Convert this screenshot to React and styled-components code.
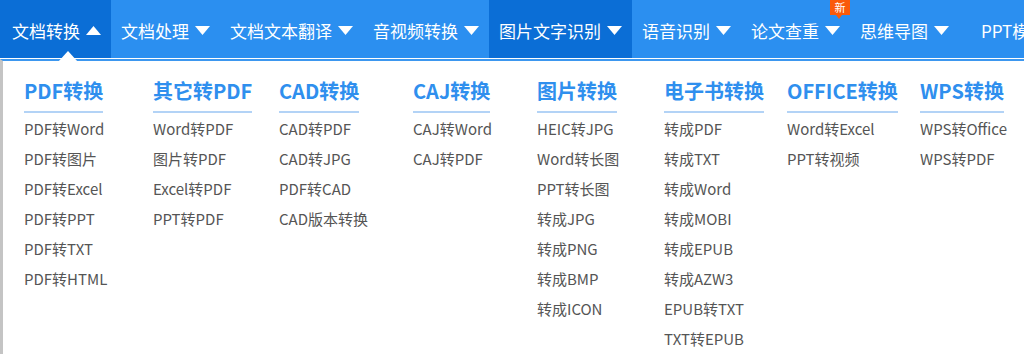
import styled, { createGlobalStyle } from "styled-components";

const GlobalStyle = createGlobalStyle`
  html, body {
    margin: 0;
    padding: 0;
    background: #ffffff;
  }
  body {
    font-family: "Noto Sans CJK SC", "Noto Sans", sans-serif;
  }
`;

const NAV_ITEMS = [
  { label: "文档转换", active: true, open: true, first: true },
  { label: "文档处理" },
  { label: "文档文本翻译" },
  { label: "音视频转换" },
  { label: "图片文字识别", active: true },
  { label: "语音识别" },
  { label: "论文查重", badge: "新" },
  { label: "思维导图" },
  { label: "PPT模板", last: true },
];

const COLUMNS = [
  { title: "PDF转换", width: 129, items: ["PDF转Word", "PDF转图片", "PDF转Excel", "PDF转PPT", "PDF转TXT", "PDF转HTML"] },
  { title: "其它转PDF", width: 126, items: ["Word转PDF", "图片转PDF", "Excel转PDF", "PPT转PDF"] },
  { title: "CAD转换", width: 134, items: ["CAD转PDF", "CAD转JPG", "PDF转CAD", "CAD版本转换"] },
  { title: "CAJ转换", width: 124, items: ["CAJ转Word", "CAJ转PDF"] },
  { title: "图片转换", width: 127, items: ["HEIC转JPG", "Word转长图", "PPT转长图", "转成JPG", "转成PNG", "转成BMP", "转成ICON"] },
  { title: "电子书转换", width: 123, items: ["转成PDF", "转成TXT", "转成Word", "转成MOBI", "转成EPUB", "转成AZW3", "EPUB转TXT", "TXT转EPUB"] },
  { title: "OFFICE转换", width: 133, items: ["Word转Excel", "PPT转视频"] },
  { title: "WPS转换", width: 104, items: ["WPS转Office", "WPS转PDF"] },
];

const Page = styled.div`
  width: 1024px;
  height: 354px;
  overflow: hidden;
  position: relative;
`;

const NavBar = styled.nav`
  display: flex;
  align-items: stretch;
  height: 58px;
  background: #2b8ff0;
  white-space: nowrap;
  overflow: hidden;
`;

const NavItem = styled.div`
  position: relative;
  display: flex;
  align-items: center;
  gap: 6px;
  padding: 2px 10px 0 ${(p) => (p.$last ? "22px" : p.$first ? "12px" : "10px")};
  background: ${(p) => (p.$active ? "#0b6ed6" : "transparent")};
  color: #ffffff;
  font-size: 17px;
  line-height: 1;
`;

const Badge = styled.span`
  position: absolute;
  top: 0;
  right: 0;
  width: 20px;
  height: 15px;
  background: #fa5a0a;
  color: #ffffff;
  font-size: 11px;
  line-height: 15px;
  text-align: center;
  &::after {
    content: "";
    position: absolute;
    left: 6px;
    bottom: -4px;
    border-left: 3px solid transparent;
    border-right: 3px solid transparent;
    border-top: 4px solid #fa5a0a;
  }
`;

const Caret = ({ up }) => (
  <svg width="15" height="9" viewBox="0 0 15 9">
    {up ? <path d="M7.5 0 L15 9 L0 9 Z" fill="#fff" /> : <path d="M0 0 L15 0 L7.5 9 Z" fill="#fff" />}
  </svg>
);

const Pointer = styled.span`
  position: absolute;
  left: 58px;
  top: 51px;
  width: 0;
  height: 0;
  border-left: 10px solid transparent;
  border-right: 10px solid transparent;
  border-bottom: 11px solid #ffffff;
  z-index: 2;
`;

const Dropdown = styled.div`
  margin-top: 1px;
  border-top: 2px solid #3d97ef;
  border-left: 3px solid #c4c4c4;
  display: flex;
  padding: 16px 0 0 21px;
  height: 400px;
  background: #ffffff;
`;

const Column = styled.div`
  flex: 0 0 auto;
  display: flex;
  flex-direction: column;
  align-items: flex-start;
`;

const ColTitle = styled.div`
  font-size: 20px;
  font-weight: 700;
  color: #2f8fee;
  line-height: 28px;
  padding-bottom: 6px;
  border-bottom: 2px solid #b3d3f6;
  margin-bottom: 1px;
  white-space: nowrap;
`;

const ColLink = styled.a`
  font-size: 15px;
  line-height: 30px;
  color: #555555;
  text-decoration: none;
  white-space: nowrap;
`;

export default function App() {
  return (
    <Page>
      <GlobalStyle />
      <NavBar>
        {NAV_ITEMS.map((item) => (
          <NavItem key={item.label} $active={item.active} $first={item.first} $last={item.last}>
            <span>{item.label}</span>
            {!item.last && <Caret up={item.open} />}
            {item.badge && <Badge>{item.badge}</Badge>}
          </NavItem>
        ))}
      </NavBar>
      <Pointer />
      <Dropdown>
        {COLUMNS.map((col) => (
          <Column key={col.title} style={{ width: col.width }}>
            <ColTitle>{col.title}</ColTitle>
            {col.items.map((it) => (
              <ColLink key={it} href="#">
                {it}
              </ColLink>
            ))}
          </Column>
        ))}
      </Dropdown>
    </Page>
  );
}
